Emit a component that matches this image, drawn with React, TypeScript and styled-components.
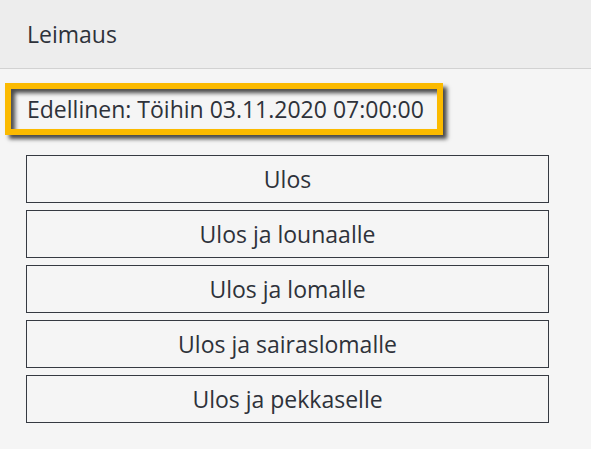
import React from "react";
import styled, { createGlobalStyle } from "styled-components";

const Global = createGlobalStyle`
  html, body { margin: 0; padding: 0; background: #f5f5f5; }
  body { font-family: "Open Sans", "Noto Sans", sans-serif; color: #2e323a; }
`;

const Page = styled.div`
  display: flex;
  flex-direction: column;
  width: 591px;
  min-height: 449px;
  background: #f5f5f5;
`;

const Header = styled.header`
  height: 68px;
  display: flex;
  align-items: center;
  padding: 0 27px;
  background: #ededed;
  border-bottom: 1px solid #d2d2d2;
  font-size: 23px;
`;

const Body = styled.main`
  display: flex;
  flex-direction: column;
  padding: 14px 42px 0 26px;
`;

const Highlight = styled.div`
  margin-left: -21px;
  width: 409.5px;
  height: 40px;
  border: 6.5px solid #fbba00;
  display: flex;
  align-items: center;
  padding-left: 16px;
  box-shadow: 4px 4px 4px rgba(0, 0, 0, 0.7), inset 4px 4px 4px rgba(0, 0, 0, 0.7);
  font-size: 23px;
  white-space: nowrap;
`;

const Actions = styled.div`
  display: flex;
  flex-direction: column;
  gap: 7px;
  margin-top: 20px;
`;

const Action = styled.button`
  height: 48px;
  background: transparent;
  border: 1.4px solid #363a42;
  font-family: inherit;
  font-size: 23px;
  color: #2e323a;
  cursor: pointer;
  padding: 0;
`;

const actions = [
  "Ulos",
  "Ulos ja lounaalle",
  "Ulos ja lomalle",
  "Ulos ja sairaslomalle",
  "Ulos ja pekkaselle",
];

export default function App() {
  return (
    <>
      <Global />
      <Page>
        <Header>Leimaus</Header>
        <Body>
          <Highlight>Edellinen: Töihin 03.11.2020 07:00:00</Highlight>
          <Actions>
            {actions.map((a) => (
              <Action key={a}>{a}</Action>
            ))}
          </Actions>
        </Body>
      </Page>
    </>
  );
}
